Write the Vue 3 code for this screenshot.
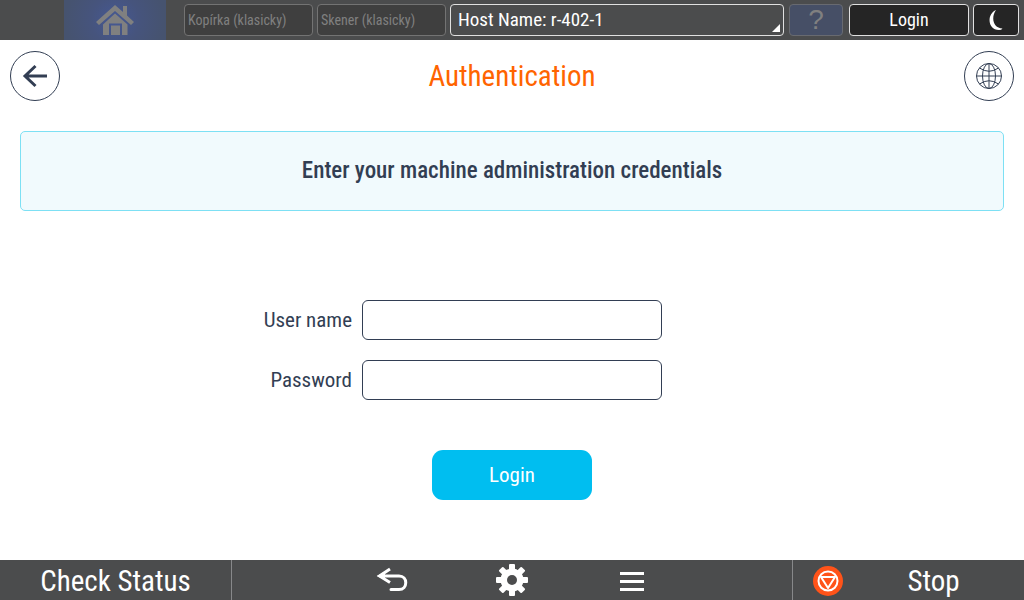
<script setup>
import { ref } from 'vue'

const username = ref('')
const password = ref('')
const apps = ['Kopírka (klasicky)', 'Skener (klasicky)']
</script>

<template>
  <div class="screen">
    <nav class="topbar" aria-label="System">
      <button class="home" type="button" aria-label="Home" disabled>
        <svg width="40" height="34" viewBox="0 0 40 34" fill="#808080">
          <path d="M20 2 L28 9 V3 H32 V12.500 L39 19 L36 22 L20 8 L4 22 L1 19Z" />
          <path d="M20 10.500 L32.500 21.500 V32 H27 V20.500 H14 V32 H8 V21.500Z" />
          <path d="M16 22.500 H25 V32 H16Z" />
        </svg>
      </button>
      <div class="apps">
        <button v-for="app in apps" :key="app" class="box app" type="button" disabled>{{ app }}</button>
        <button class="box host" type="button">Host Name: r-402-1</button>
      </div>
      <button class="box help" type="button" disabled aria-label="Help">?</button>
      <button class="box session" type="button">Login</button>
      <button class="box sleep" type="button" aria-label="Sleep">
        <svg width="16" height="22" viewBox="0 0 16 22">
          <path d="M8 1 C-1.500 5 -.5 21 11 21 Q13.500 21 14.500 19.500 C5.500 19 2.500 9 8 1Z" fill="#fff" />
        </svg>
      </button>
    </nav>

    <main>
      <header class="heading">
        <button class="round" type="button" aria-label="Back">
          <svg width="26" height="24" viewBox="0 0 26 24" fill="none" stroke="#323e53" stroke-width="3">
            <path d="M25 12 H4 M13.500 2 L3 12 L13.500 22" />
          </svg>
        </button>
        <h1>Authentication</h1>
        <button class="round" type="button" aria-label="Language">
          <svg width="28" height="28" viewBox="0 0 28 28" fill="none" stroke="#323e53" stroke-width="1">
            <circle cx="14" cy="14" r="12.500" />
            <ellipse cx="14" cy="14" rx="6.500" ry="12.500" />
            <path d="M14 1.500 V26.500 M1.500 14 H26.500 M4.500 6 Q14 12.500 23.500 6 M4.500 22 Q14 15.500 23.500 22" />
          </svg>
        </button>
      </header>

      <p class="banner">Enter your machine administration credentials</p>

      <form @submit.prevent>
        <label for="username">User name</label>
        <input id="username" v-model="username" type="text" autocomplete="username" />
        <label for="password">Password</label>
        <input id="password" v-model="password" type="password" autocomplete="current-password" />
        <button class="submit" type="submit">Login</button>
      </form>
    </main>

    <footer class="bottombar">
      <button class="status" type="button">Check Status</button>
      <div class="keys">
        <button type="button" aria-label="Return">
          <svg width="32" height="26" viewBox="0 0 32 26" fill="none" stroke="#fff" stroke-width="3">
            <path d="M5 9 H23 C32 9 32 22.500 23 22.500 H15" stroke-linecap="round" />
            <path d="M14 2 L3.500 9 L14 15.500" />
            <path d="M1 9 L9 4.500 V13Z" fill="#fff" stroke="none" />
          </svg>
        </button>
        <button type="button" aria-label="Settings">
          <svg width="32" height="32" viewBox="0 0 32 32">
            <g fill="#fff">
              <rect v-for="a in [0, 45, 90, 135]" :key="a" x="13" y="0" width="6" height="32" rx="1" :transform="`rotate(${a} 16 16)`" />
              <circle cx="16" cy="16" r="11.500" />
            </g>
            <circle cx="16" cy="16" r="5" fill="#4b4c4d" />
          </svg>
        </button>
        <button type="button" aria-label="Menu">
          <svg width="24" height="22" viewBox="0 0 24 22" fill="#fff">
            <path d="M0 3 H24 V6 H0Z M0 11 H24 V14 H0Z M0 19 H24 V22 H0Z" />
          </svg>
        </button>
      </div>
      <button class="stop" type="button">
        <svg width="30" height="30" viewBox="0 0 30 30" fill="none" stroke="#fff" stroke-width="2">
          <circle cx="15" cy="15" r="15" fill="#ff5319" stroke="none" />
          <circle cx="15" cy="15" r="9.500" />
          <path d="M8 11 H22 L15 22Z" stroke-linejoin="round" />
        </svg>
        <span>Stop</span>
      </button>
    </footer>
  </div>
</template>

<style>
body {
  margin: 0;
  background: #fff;
}
</style>

<style scoped>
.screen {
  display: flex;
  flex-direction: column;
  min-height: 100vh;
  color: #323e53;
  font-family: "Roboto Condensed", Roboto, "Liberation Sans", sans-serif;
}
button,
input {
  box-sizing: border-box;
  margin: 0;
  padding: 0;
  font: inherit;
  color: inherit;
}
button {
  border: 0;
  background: none;
}
svg {
  display: block;
}
.topbar {
  display: flex;
  align-items: center;
  height: 40px;
  padding: 0 5px 0 64px;
  background: #4b4c4d;
  color: #fff;
}
.home {
  display: flex;
  align-items: center;
  justify-content: center;
  width: 102px;
  height: 40px;
  margin-right: 18px;
  background: radial-gradient(circle at center, #455894 0, #46547d 24px, #46536f 50px);
}
.apps {
  display: flex;
  flex: 1;
  gap: 4px;
  margin-right: 5px;
}
.box {
  height: 32px;
  border: 1px solid #e0e0e0;
  border-radius: 4px;
  font-size: 18px;
  line-height: 30px;
}
.app {
  width: 129px;
  padding-left: 3px;
  border-color: #737373;
  background: #3f3f3f;
  color: #808080;
  font-size: 14px;
  text-align: left;
}
.host {
  position: relative;
  flex: 1;
  padding-left: 7px;
  font-size: 19px;
  text-align: left;
}
.host::after {
  content: "";
  position: absolute;
  right: 3px;
  bottom: 3px;
  border-bottom: 8px solid #fff;
  border-left: 8px solid transparent;
}
.help {
  width: 54px;
  margin-right: 6px;
  border-color: #686a70;
  background: #464f66;
  color: #808080;
  font-family: "Liberation Sans", Arial, sans-serif;
  font-size: 28px;
}
.session {
  width: 120px;
  margin-right: 4px;
  background: #252525;
}
.sleep {
  display: flex;
  align-items: center;
  justify-content: center;
  width: 46px;
  background: #252525;
}
main {
  flex: 1;
}
.heading {
  display: grid;
  grid-template-columns: 50px 1fr 50px;
  align-items: center;
  padding: 11px 10px 0;
}
.round {
  display: flex;
  align-items: center;
  justify-content: center;
  height: 50px;
  border: 1px solid #323e53;
  border-radius: 50%;
}
h1 {
  margin: 0;
  color: #ff6400;
  font-size: 29px;
  font-weight: 400;
  line-height: 50px;
  text-align: center;
}
.banner {
  margin: 30px 20px 0;
  border: 1px solid #7de0f4;
  border-radius: 5px;
  background: #f1fafd;
  font-size: 23px;
  font-weight: 500;
  line-height: 78px;
  text-align: center;
}
form {
  display: grid;
  grid-template-columns: 1fr 300px 1fr;
  gap: 20px 10px;
  align-items: center;
  margin: 89px 20px 60px;
  font-size: 21px;
}
label {
  grid-column: 1;
  text-align: right;
}
input {
  grid-column: 2;
  height: 40px;
  padding: 0 10px;
  border: 1px solid #323e53;
  border-radius: 6px;
  background: #fff;
}
.submit {
  grid-column: 2;
  justify-self: center;
  width: 160px;
  height: 50px;
  margin-top: 30px;
  border-radius: 11px;
  background: #00bef0;
  color: #fff;
}
.bottombar {
  display: grid;
  grid-template-columns: 232px 1fr 232px;
  height: 40px;
  background: #4b4c4d;
  color: #fff;
  font-size: 29px;
}
.bottombar > button {
  padding-top: 2px;
}
.status {
  border-right: 1px solid #87888a;
}
.keys {
  display: flex;
  justify-content: center;
}
.keys button {
  display: flex;
  align-items: center;
  justify-content: center;
  width: 120px;
}
.stop {
  display: grid;
  grid-template-columns: 30px 1fr;
  align-items: center;
  padding-left: 20px;
  border-left: 1px solid #87888a;
}
</style>
